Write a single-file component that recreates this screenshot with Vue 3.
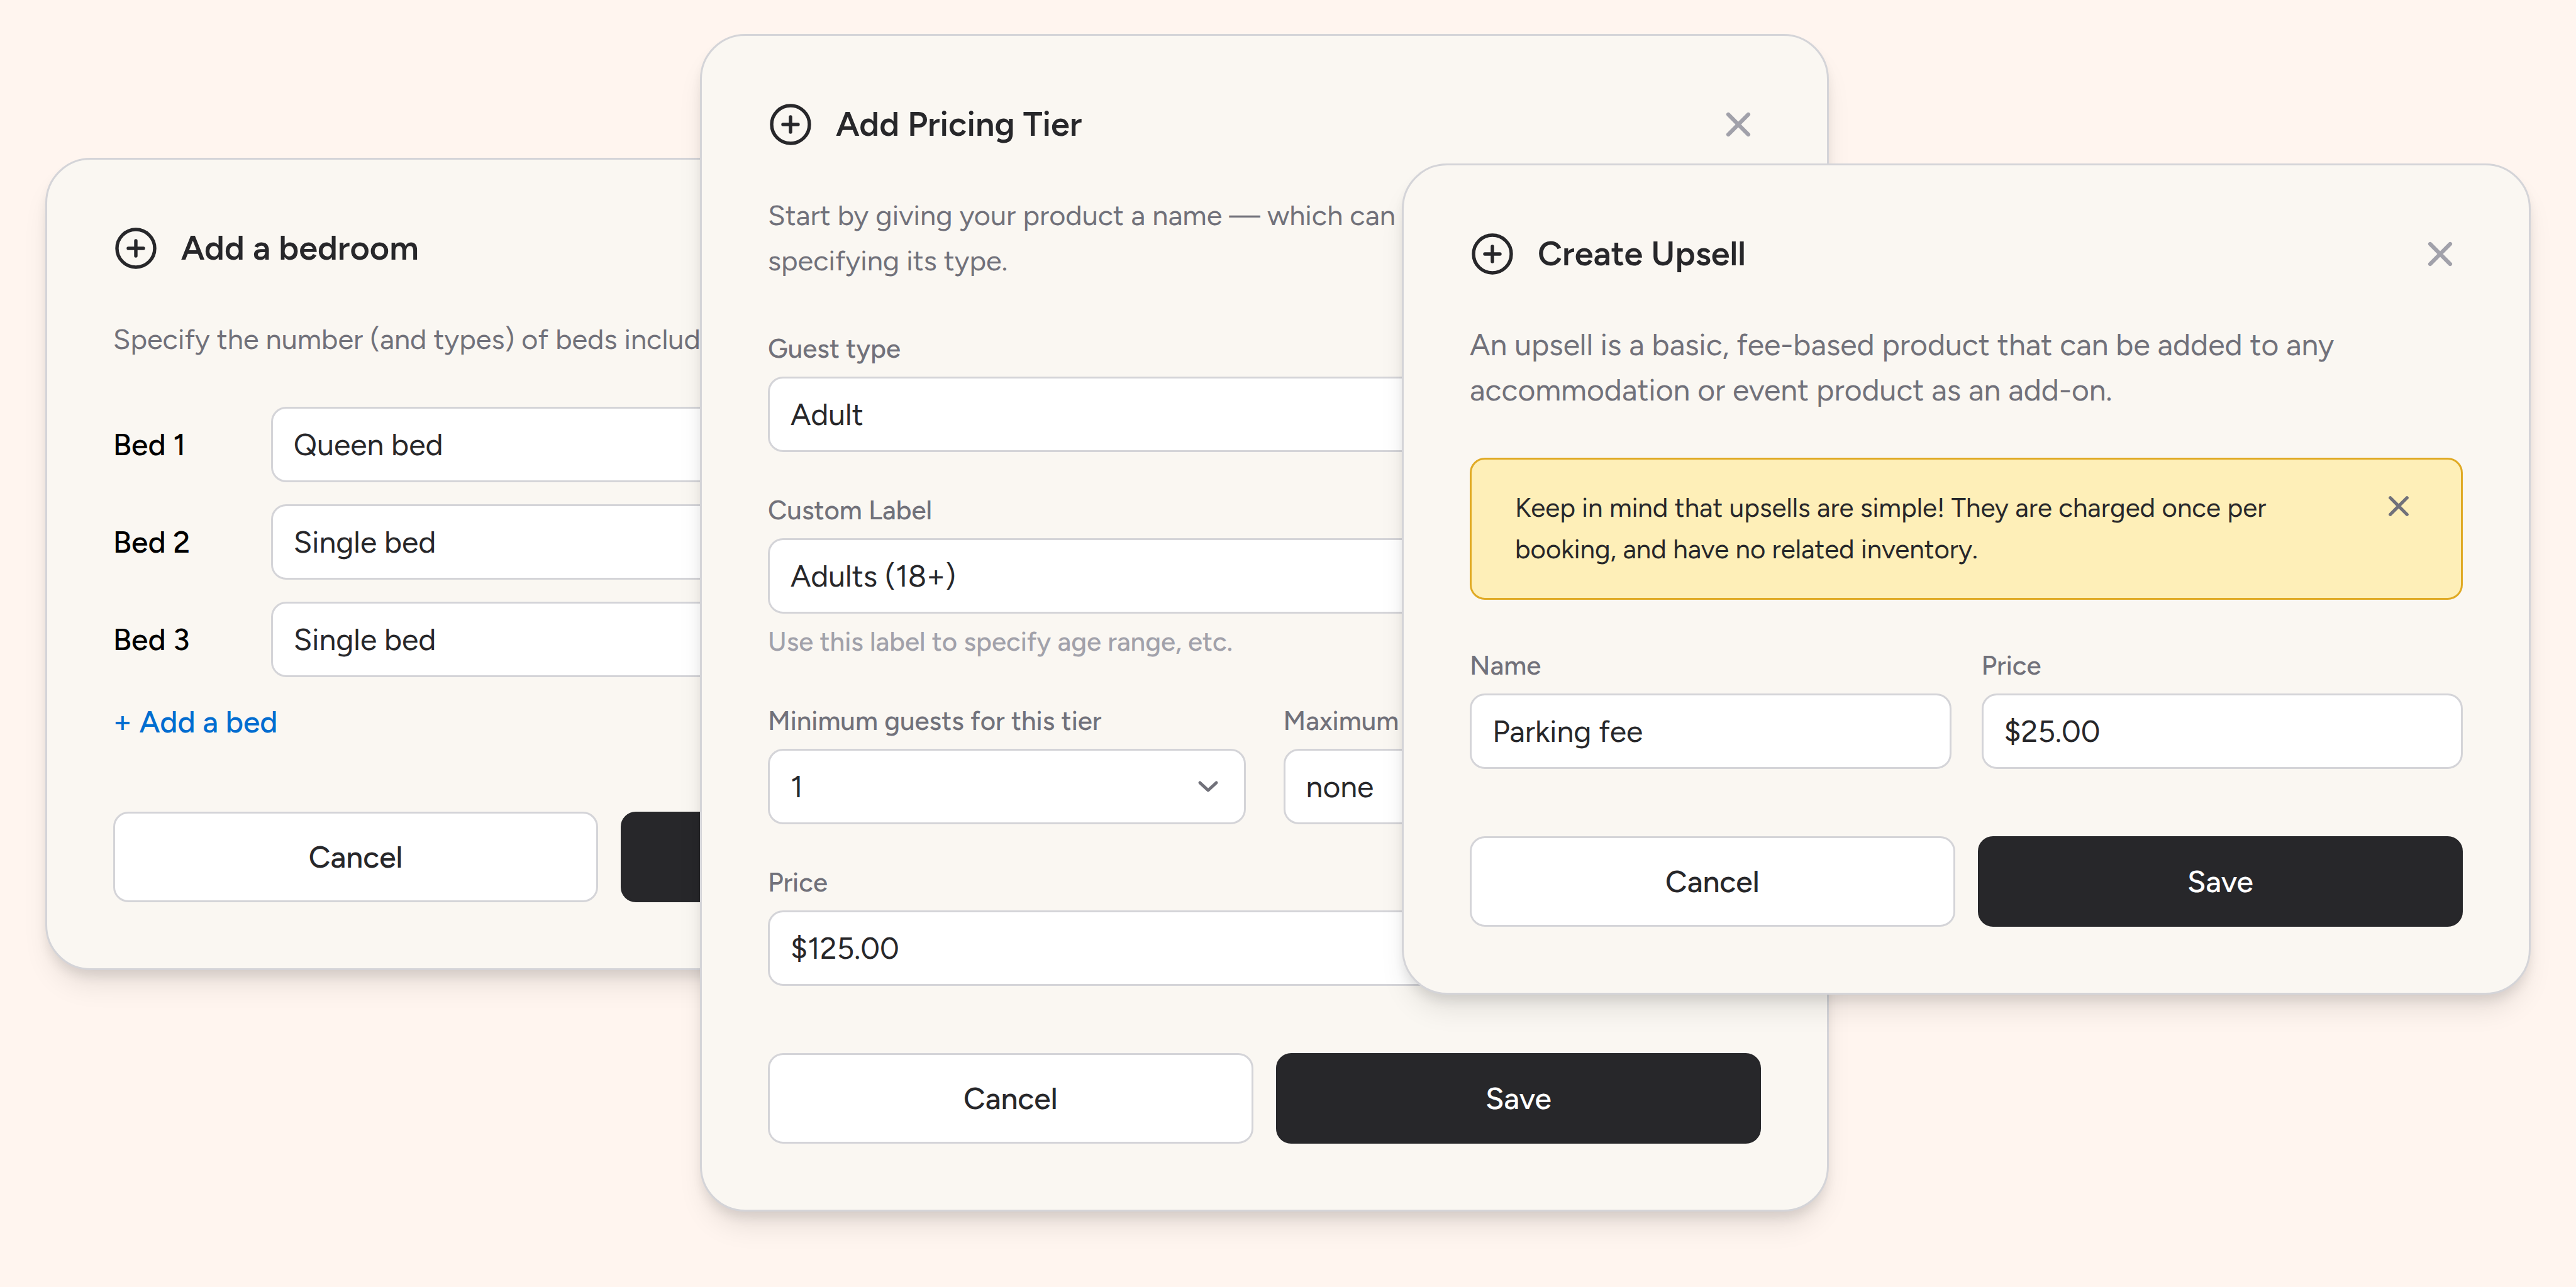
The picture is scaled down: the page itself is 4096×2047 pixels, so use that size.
<script setup>
import { ref } from 'vue'

const bedTypes = ['Queen bed', 'Single bed', 'King bed', 'Bunk bed']
const beds = ref(['Queen bed', 'Single bed', 'Single bed'])

const guestType = ref('Adult')
const customLabel = ref('Adults (18+)')
const minGuests = ref('1')
const maxGuests = ref('none')
const tierPrice = ref('$125.00')

const upsellName = ref('Parking fee')
const upsellPrice = ref('$25.00')
const noticeOpen = ref(true)

const addBed = () => beds.value.push('Single bed')
</script>

<template>
  <main class="stage">
    <!-- Add a bedroom -->
    <form class="card card-bedroom" @submit.prevent>
      <header class="card-head">
        <svg class="icon" viewBox="0 0 24 24" aria-hidden="true">
          <circle cx="12" cy="12" r="10" />
          <path d="M12 8v8M8 12h8" />
        </svg>
        <h2 class="title">Add a bedroom</h2>
      </header>
      <p class="desc desc-compact">Specify the number (and types) of beds included in this bedroom.</p>

      <div class="beds">
        <div v-for="(bed, i) in beds" :key="i" class="bed-row">
          <label class="bed-label" :for="'bed-' + i">Bed {{ i + 1 }}</label>
          <div class="select">
            <select :id="'bed-' + i" v-model="beds[i]" class="control">
              <option v-for="type in bedTypes" :key="type">{{ type }}</option>
            </select>
            <svg class="chevron" viewBox="0 0 36 36" aria-hidden="true"><path d="M5 12l13 12 13-12" /></svg>
          </div>
        </div>
        <button type="button" class="add-link" @click="addBed">+ Add a bed</button>
      </div>

      <footer class="actions">
        <button type="button" class="btn">Cancel</button>
        <button type="submit" class="btn btn-dark">Save</button>
      </footer>
    </form>

    <!-- Add Pricing Tier -->
    <form class="card card-tier" @submit.prevent>
      <header class="card-head">
        <svg class="icon" viewBox="0 0 24 24" aria-hidden="true">
          <circle cx="12" cy="12" r="10" />
          <path d="M12 8v8M8 12h8" />
        </svg>
        <h2 class="title">Add Pricing Tier</h2>
        <button type="button" class="close" aria-label="Close">
          <svg class="icon icon-x" viewBox="0 0 24 24" aria-hidden="true"><path d="M6.7 6.7l10.6 10.6M17.3 6.7L6.7 17.3" /></svg>
        </button>
      </header>
      <p class="desc desc-compact">Start by giving your product a name — which can also be edited later and specifying its type.</p>

      <div class="fields">
        <div class="field">
          <label for="guest-type">Guest type</label>
          <div class="select">
            <select id="guest-type" v-model="guestType" class="control">
              <option>Adult</option>
              <option>Child</option>
            </select>
            <svg class="chevron" viewBox="0 0 36 36" aria-hidden="true"><path d="M5 12l13 12 13-12" /></svg>
          </div>
        </div>
        <div class="field">
          <label for="custom-label">Custom Label</label>
          <input id="custom-label" v-model="customLabel" class="control" type="text" aria-describedby="custom-hint" />
          <p id="custom-hint" class="hint">Use this label to specify age range, etc.</p>
        </div>
        <div class="pair pair-wide">
          <div class="field">
            <label for="min-guests">Minimum guests for this tier</label>
            <div class="select">
              <select id="min-guests" v-model="minGuests" class="control">
                <option>1</option>
                <option>2</option>
              </select>
              <svg class="chevron" viewBox="0 0 36 36" aria-hidden="true"><path d="M5 12l13 12 13-12" /></svg>
            </div>
          </div>
          <div class="field">
            <label for="max-guests">Maximum guests for this tier</label>
            <div class="select">
              <select id="max-guests" v-model="maxGuests" class="control">
                <option>none</option>
                <option>2</option>
              </select>
              <svg class="chevron" viewBox="0 0 36 36" aria-hidden="true"><path d="M5 12l13 12 13-12" /></svg>
            </div>
          </div>
        </div>
        <div class="field">
          <label for="tier-price">Price</label>
          <input id="tier-price" v-model="tierPrice" class="control" type="text" />
        </div>
      </div>

      <footer class="actions">
        <button type="button" class="btn">Cancel</button>
        <button type="submit" class="btn btn-dark">Save</button>
      </footer>
    </form>

    <!-- Create Upsell -->
    <form class="card card-upsell" @submit.prevent>
      <header class="card-head">
        <svg class="icon" viewBox="0 0 24 24" aria-hidden="true">
          <circle cx="12" cy="12" r="10" />
          <path d="M12 8v8M8 12h8" />
        </svg>
        <h2 class="title">Create Upsell</h2>
        <button type="button" class="close" aria-label="Close">
          <svg class="icon icon-x" viewBox="0 0 24 24" aria-hidden="true"><path d="M6.7 6.7l10.6 10.6M17.3 6.7L6.7 17.3" /></svg>
        </button>
      </header>
      <p class="desc">An upsell is a basic, fee-based product that can be added to any accommodation or event product as an add-on.</p>

      <div v-if="noticeOpen" class="notice" role="status">
        <p class="notice-text">Keep in mind that upsells are simple! They are charged once per booking, and have no related inventory.</p>
        <button type="button" class="notice-close" aria-label="Dismiss" @click="noticeOpen = false">
          <svg class="icon icon-x icon-small" viewBox="0 0 24 24" aria-hidden="true"><path d="M6.7 6.7l10.6 10.6M17.3 6.7L6.7 17.3" /></svg>
        </button>
      </div>

      <div class="fields">
        <div class="pair">
          <div class="field">
            <label for="upsell-name">Name</label>
            <input id="upsell-name" v-model="upsellName" class="control" type="text" />
          </div>
          <div class="field">
            <label for="upsell-price">Price</label>
            <input id="upsell-price" v-model="upsellPrice" class="control" type="text" />
          </div>
        </div>
      </div>

      <footer class="actions">
        <button type="button" class="btn">Cancel</button>
        <button type="submit" class="btn btn-dark">Save</button>
      </footer>
    </form>
  </main>
</template>

<style>
body {
  background: #fff5ef;
}
</style>

<style scoped>
/* Column lines sit on the card edges, so the three cards overlap by spanning shared tracks. */
.stage {
  display: grid;
  grid-template-columns:
    minmax(0, 72fr) minmax(0, 1044fr) minmax(0, 756fr) minmax(0, 363fr)
    minmax(0, 681fr) minmax(0, 1119fr) minmax(0, 72fr);
  align-items: start;
  min-height: 100vh;
  box-sizing: border-box;
  background: #fff5ef;
  color: #27272a;
  font-family: Figtree, Lato, "Liberation Sans", sans-serif;
  font-size: 48px;
  line-height: 72px;
}

.card {
  grid-row: 1;
  box-sizing: border-box;
  padding: 105px;
  border: 3px solid #d4d4d8;
  border-radius: 72px;
  background: #faf7f2;
  box-shadow: 0 30px 45px -9px rgb(0 0 0 / 0.1), 0 12px 18px -3px rgb(0 0 0 / 0.09);
}

.card-bedroom {
  grid-column: 2 / 4;
  margin-top: 251px;
}

.card-tier {
  grid-column: 3 / 6;
  margin-top: 54px;
}

.card-upsell {
  grid-column: 5 / 7;
  margin-top: 260px;
}

.card-head {
  display: flex;
  align-items: center;
  gap: 36px;
  margin-bottom: 72px;
}

.title {
  flex: 1;
  margin: 0;
  font-size: 54px;
  font-weight: 600;
  line-height: 72px;
}

.icon {
  display: block;
  flex: none;
  width: 72px;
  height: 72px;
  fill: none;
  stroke: currentColor;
  stroke-width: 1.8;
  stroke-linecap: round;
}

.icon-x {
  stroke-width: 2.1;
}

.icon-small {
  width: 60px;
  height: 60px;
}

.close,
.notice-close {
  flex: none;
  padding: 0;
  border: 0;
  background: none;
  color: #a1a1aa;
  cursor: pointer;
}

.desc {
  margin: 0 0 72px;
  color: #71717a;
}

.desc-compact {
  font-size: 45px;
}

.beds {
  display: flex;
  flex-direction: column;
  align-items: stretch;
  gap: 35px;
}

.bed-row {
  display: grid;
  grid-template-columns: 215px minmax(0, 1fr);
  align-items: center;
  gap: 36px;
}

.bed-label {
  color: #000;
  font-weight: 500;
}

.add-link {
  align-self: flex-start;
  padding: 0;
  border: 0;
  background: none;
  color: #006dd0;
  font: inherit;
  font-weight: 500;
  cursor: pointer;
}

.fields {
  display: flex;
  flex-direction: column;
  gap: 60px;
}

.field {
  display: flex;
  flex-direction: column;
}

.field label {
  margin-bottom: 11px;
  color: #71717a;
  font-size: 42px;
  font-weight: 500;
  line-height: 66px;
}

.hint {
  margin: 12px 0 0;
  color: #a1a1aa;
  font-size: 42px;
  font-weight: 500;
  line-height: 66px;
}

.pair {
  display: grid;
  grid-template-columns: repeat(2, minmax(0, 1fr));
  gap: 48px;
}

.pair-wide {
  gap: 60px;
}

.control {
  display: block;
  box-sizing: border-box;
  width: 100%;
  height: 120px;
  margin: 0;
  padding: 0 33px;
  border: 3px solid #d4d4d8;
  border-radius: 24px;
  outline: 0;
  background: #fff;
  color: #27272a;
  font: inherit;
  appearance: none;
}

.select {
  display: grid;
  align-items: center;
}

.select > * {
  grid-area: 1 / 1;
}

.chevron {
  justify-self: end;
  width: 36px;
  height: 36px;
  margin-right: 42px;
  fill: none;
  stroke: #71717a;
  stroke-width: 5;
  stroke-linecap: round;
  stroke-linejoin: round;
  pointer-events: none;
}

.notice {
  display: flex;
  align-items: flex-start;
  gap: 36px;
  margin-bottom: 72px;
  padding: 44px 69px;
  border: 3px solid #e0aa24;
  border-radius: 24px;
  background: #feefb8;
}

.notice-text {
  flex: 1;
  margin: 0;
  font-size: 42px;
  line-height: 66px;
}

.notice-close {
  color: #71717a;
}

.actions {
  display: grid;
  grid-template-columns: repeat(2, minmax(0, 1fr));
  gap: 36px;
  margin-top: 107px;
}

.btn {
  height: 144px;
  padding: 0;
  border: 3px solid #d4d4d8;
  border-radius: 24px;
  background: #fff;
  color: #27272a;
  font: inherit;
  font-weight: 500;
  cursor: pointer;
}

.btn-dark {
  border-color: #27272a;
  background: #27272a;
  color: #fff;
}
</style>
